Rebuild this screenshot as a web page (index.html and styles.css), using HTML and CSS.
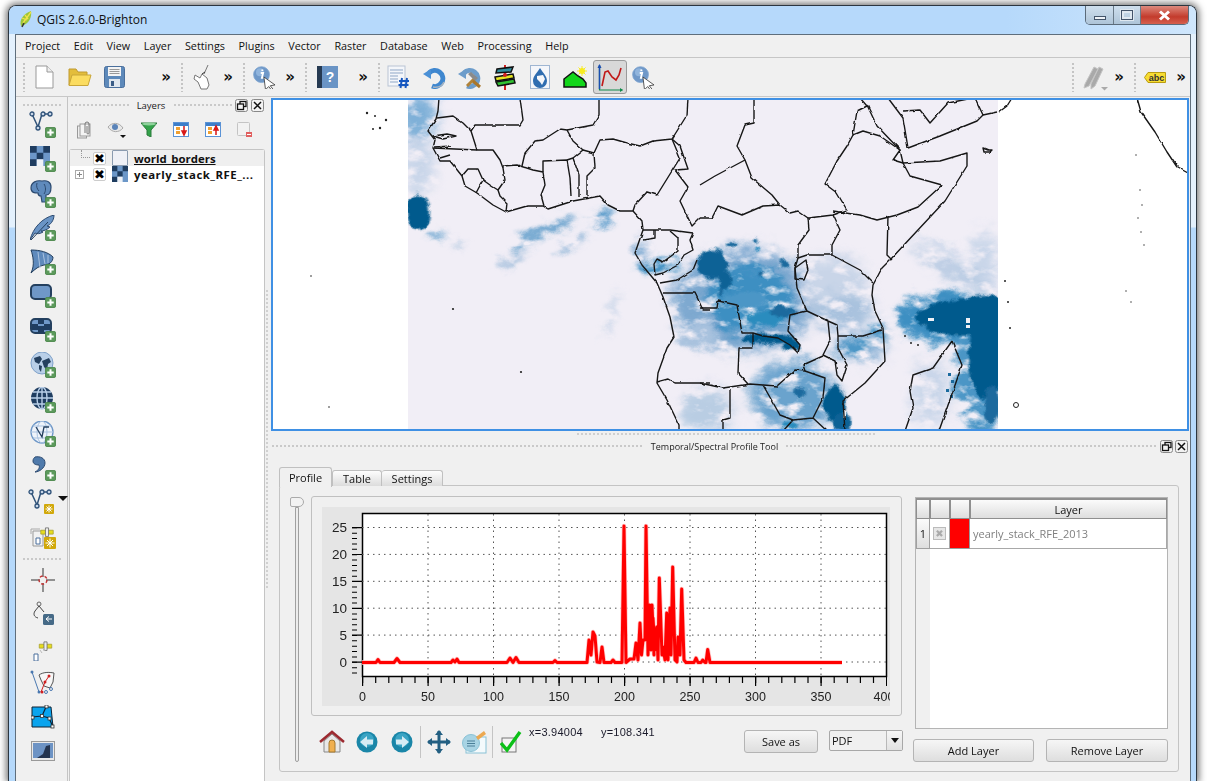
FILE: index.html
```html
<!DOCTYPE html>
<html lang="en">
<head>
<meta charset="utf-8">
<title>QGIS 2.6.0-Brighton</title>
<link rel="stylesheet" href="styles.css">
</head>
<body>
<svg class="defs" width="0" height="0" aria-hidden="true">
  <defs>
    <symbol id="plus" viewBox="0 0 12 12"><rect x=".5" y=".5" width="11" height="11" rx="1.5" fill="#5c9a5c" stroke="#4a874a"/><path d="M6 2.5v7M2.5 6h7" stroke="#fff" stroke-width="2.2"/></symbol>
    <symbol id="idn" viewBox="0 0 34 30"><circle cx="12" cy="12" r="10" fill="#6f98c8" stroke="#7fa5d0"/><circle cx="10" cy="9" r="5" fill="#90b4dc"/><path d="M13 5.5v2M11 10h3l-1.500 6h2" stroke="#fff" stroke-width="2.300" fill="none"/><path d="M15 15l14 10-6 1 4 5-2 1-4-5-4 4z" fill="#fff" stroke="#333"/></symbol>
    <symbol id="grid4" viewBox="0 0 20 20"><rect width="20" height="20" fill="#6c97c8"/><path d="M0 0h6.700v6.700H0zM13.300 0H20v6.700h-6.700zM6.700 6.700h6.600v6.600H6.700zM0 13.300h6.700V20H0z" fill="#1f3d60"/><path d="M6.700 13.300h6.600V20H6.700z" fill="#eef2f7"/></symbol>
    <symbol id="sm-max" viewBox="0 0 13 13"><rect x=".5" y=".5" width="12" height="12" rx="2" fill="#f2f2f2" stroke="#888"/><rect x="5" y="2.500" width="6" height="5" fill="none" stroke="#111" stroke-width="1.300"/><rect x="2.500" y="5" width="6" height="5.500" fill="#f2f2f2" stroke="#111" stroke-width="1.300"/></symbol>
    <symbol id="sm-x" viewBox="0 0 13 13"><rect x=".5" y=".5" width="12" height="12" rx="2" fill="#f2f2f2" stroke="#888"/><path d="M3 3l7 7M10 3l-7 7" stroke="#111" stroke-width="1.500"/></symbol>
    <symbol id="snap" viewBox="0 0 20 18"><path d="M2 8h16v5H2z" fill="#e6dc1e" stroke="#a8a030"/><path d="M8 5h4v11H8z" fill="#eee" stroke="#666"/></symbol>
    <filter id="b1" x="-30%" y="-30%" width="160%" height="160%"><feGaussianBlur stdDeviation="1.200"/></filter>
    <filter id="b3" x="-30%" y="-30%" width="160%" height="160%"><feGaussianBlur stdDeviation="3"/></filter>
    <filter id="b6" x="-30%" y="-30%" width="160%" height="160%"><feGaussianBlur stdDeviation="6"/></filter>
    <filter id="rough" filterUnits="userSpaceOnUse" x="400" y="90" width="610" height="350" color-interpolation-filters="sRGB">
      <feTurbulence type="fractalNoise" baseFrequency=".05 .08" numOctaves="4" seed="7" result="n"/>
      <feDisplacementMap in="SourceGraphic" in2="n" scale="20" xChannelSelector="R" yChannelSelector="G" result="d"/>
      <feColorMatrix in="n" type="matrix" values="0 0 0 0 0 0 0 0 0 0 0 0 0 0 0 3.500 0 0 0 -.8" result="a"/>
      <feComposite in="d" in2="a" operator="in"/>
    </filter>
    <filter id="rough2" filterUnits="userSpaceOnUse" x="400" y="90" width="610" height="350" color-interpolation-filters="sRGB">
      <feTurbulence type="fractalNoise" baseFrequency=".09" numOctaves="3" seed="4" result="n"/>
      <feDisplacementMap in="SourceGraphic" in2="n" scale="9" xChannelSelector="R" yChannelSelector="G"/>
    </filter>
    <filter id="wiggle" filterUnits="userSpaceOnUse" x="271" y="90" width="930" height="350" color-interpolation-filters="sRGB">
      <feTurbulence type="fractalNoise" baseFrequency=".12" numOctaves="2" seed="2" result="n"/>
      <feDisplacementMap in="SourceGraphic" in2="n" scale="2.500" xChannelSelector="R" yChannelSelector="G"/>
    </filter>
    <clipPath id="mapclip"><rect x="408" y="98" width="590" height="333"/></clipPath>
  </defs>
</svg>

<div class="window">
  <header class="titlebar">
    <svg class="appicon" width="16" height="18" viewBox="0 0 16 18"><path d="M3 16C1 10 5 4 13 1c1 6-2 12-7 14z" fill="#9cc53b"/><path d="M5 13l8-11M4 8l5 2M7 5l3 4" stroke="#f0e24a" stroke-width="1.300"/><path d="M4 17l2-4" stroke="#333" stroke-width="1.500"/></svg>
    <span class="apptitle">QGIS 2.6.0-Brighton</span>
    <div class="winbtns">
      <span class="wb wb-min"><i class="g-min"></i></span>
      <span class="wb wb-max"><i class="g-max"></i></span>
      <span class="wb wb-close"><svg width="13" height="11" viewBox="0 0 13 11"><path d="M2 1.500l9 8M11 1.500l-9 8" stroke="#fff" stroke-width="3"/></svg></span>
    </div>
  </header>

  <div class="client">
    <nav class="menubar">
      <span>Project</span><span>Edit</span><span>View</span><span>Layer</span><span>Settings</span><span>Plugins</span><span>Vector</span><span>Raster</span><span>Database</span><span>Web</span><span>Processing</span><span>Help</span>
    </nav>

    <div class="toolbar">
      <div class="tg tg-file">
        <i class="grip"></i>
        <span class="tb"><svg width="19" height="24" viewBox="0 0 19 24"><path d="M1 1h11l6 6v16H1z" fill="#fff" stroke="#999"/><path d="M12 1v6h6" fill="#eee" stroke="#999"/></svg></span>
        <span class="tb"><svg width="24" height="20" viewBox="0 0 24 20"><path d="M1 18V2h7l2 3h9v3" fill="#e3bd3c" stroke="#c09a30"/><path d="M1 18.500L4 8h19l-3 10.500z" fill="#fbdc60" stroke="#c9a638"/></svg></span>
        <span class="tb"><svg width="21" height="22" viewBox="0 0 21 22"><rect x=".5" y=".5" width="20" height="21" rx="2" fill="#5d89ba" stroke="#4a6f9c"/><rect x="4" y="1" width="13" height="9" fill="#f4f4f4"/><path d="M5.500 3.500h10M5.500 5.500h10M5.500 7.500h10" stroke="#999"/><rect x="5" y="13" width="11" height="8" fill="#dfe6ee"/><rect x="7" y="15" width="3" height="5" fill="#3a5c86"/></svg></span>
        <b class="more">»</b>
      </div>
      <div class="tg tg-touch">
        <i class="grip"></i>
        <span class="tb tb-n"><svg width="20" height="26" viewBox="0 0 20 26"><path d="M15 1l-4 9M2 11l5 3 2-4 5 4 2 7-2 4H8l-3-7-4-3z" fill="#fff" stroke="#777"/><path d="M9 10l3-2" stroke="#333"/></svg></span>
        <b class="more">»</b>
      </div>
      <div class="tg tg-touch">
        <i class="grip"></i>
        <span class="tb tb-n"><svg width="27" height="24" viewBox="0 0 34 30"><use href="#idn"/></svg></span>
        <b class="more">»</b>
      </div>
      <div class="tg tg-help">
        <i class="grip"></i>
        <span class="tb tb-h"><svg width="21" height="22" viewBox="0 0 21 22"><rect width="21" height="22" fill="#6a94c5"/><rect width="5" height="22" fill="#263a52"/><text class="helpq" x="13" y="16">?</text></svg></span>
        <b class="more">»</b>
      </div>
      <div class="tg tg-rest">
        <i class="grip"></i>
        <span class="tb tb-t"><svg width="25" height="24" viewBox="0 0 25 24"><rect x="1" y="1" width="17" height="20" fill="#f4f6fa" stroke="#b9c4d4"/><path d="M3 5h13M3 8h13M3 11h8M3 14h8M3 17h8" stroke="#8fa7c7"/><path d="M15 13l-1.500 10M20 13l-1.500 10M12 16h10M11.500 20h10" stroke="#1556c0" stroke-width="2"/></svg></span>
        <span class="tb tb-t"><svg width="23" height="23" viewBox="0 0 23 23"><path d="M6 7a8 8 0 1 1 3 13" fill="none" stroke="#3f87cf" stroke-width="5"/><path d="M0 8l8-5v10z" fill="#4a90d6"/><path d="M10 21c5 1 9-1 11-5" fill="none" stroke="#aab5c0" stroke-width="1.500"/></svg></span>
        <span class="tb tb-t"><svg width="24" height="23" viewBox="0 0 24 23"><path d="M6 7a8 8 0 1 1 3 13" fill="none" stroke="#6d9dcb" stroke-width="5"/><path d="M0 8l8-5v10z" fill="#6d9dcb"/><path d="M9 20l8-8" stroke="#b08238" stroke-width="3"/><path d="M10 8l7 7 3-3-7-6z" fill="#8a8a8a"/><path d="M15 15l7 6" stroke="#a9762b" stroke-width="3"/></svg></span>
        <span class="tb tb-t"><svg width="24" height="25" viewBox="0 0 24 25"><path d="M12 0v25" stroke="#d02020" stroke-width="2"/><path d="M4 4l16-2-2 5-15 1z" fill="#2f8f9f" stroke="#111" stroke-width="1.500"/><path d="M2 12l18-3 1 4-18 3z" fill="#e6e622" stroke="#111" stroke-width="1.500"/><path d="M3 17l18-3 1 4-17 3z" fill="#33c233" stroke="#111" stroke-width="1.500"/><circle cx="12" cy="10" r="2" fill="#d02020"/></svg></span>
        <span class="tb tb-t"><svg width="20" height="24" viewBox="0 0 20 24"><rect x=".5" y=".5" width="19" height="23" fill="#f4f6fa" stroke="#9fb6d2"/><path d="M10 3c3 5 7 8 7 13a7 7 0 0 1-14 0c0-5 4-8 7-13z" fill="#2f6db0"/><path d="M7 11l6-1 2 4-3 6-2-3-3-3z" fill="#f4f6fa"/></svg></span>
        <span class="tb tb-t"><svg width="24" height="22" viewBox="0 0 24 22"><path d="M1 21v-8l9-7 5 4 5 3 3 4v4z" fill="#12d61a" stroke="#111" stroke-width="1.500"/><circle cx="19" cy="5" r="3" fill="#f8ec20"/><path d="M19 0v10M14 5h10M15.500 1.500l7 7M22.500 1.500l-7 7" stroke="#f8ec20"/></svg></span>
        <span class="tb tb-on"><svg width="26" height="29" viewBox="0 0 26 29"><path d="M2.500 3v24h23" fill="none" stroke="#0e8a4a" stroke-width="1.200"/><path d="M2.500 2v24" stroke="#1a4fb0" stroke-width="1.500"/><path d="M.5 5l2-4 2 4z" fill="#1a4fb0"/><path d="M23 25l3 2-3 2z" fill="#0e8a4a"/><path d="M5 23l3-14 3-1 4 6 4 3 3-5 2-7" fill="none" stroke="#c01818" stroke-width="1.600"/></svg></span>
        <span class="tb tb-i"><svg width="27" height="24" viewBox="0 0 34 30"><use href="#idn"/></svg></span>
      </div>
      <div class="tg tg-pen">
        <i class="grip"></i>
        <span class="tb tb-p"><svg width="26" height="28" viewBox="0 0 26 28"><path d="M3 21l9-17 4 2-9 17-5 2zM9 21l8-17 4 2-8 17-4 3z" fill="#a9a9a9" stroke="#c4c4c4"/><path d="M19 24h7l-3.500 3.500z" fill="#aaa"/></svg></span>
        <b class="more">»</b>
      </div>
      <div class="tg tg-abc">
        <i class="grip"></i>
        <span class="tb tb-a"><svg width="22" height="11" viewBox="0 0 22 11"><path d="M4 .5h17.500v10H4L.5 5.500z" fill="#f7dc32" stroke="#b99c10"/><text class="abc" x="12.500" y="8.500">abc</text></svg></span>
        <b class="more">»</b>
      </div>
    </div>

    <div class="main">
      <aside class="vtoolbar">
        <i class="hgrip"></i>
        <span class="vb"><svg width="28" height="28" viewBox="0 0 28 28"><path d="M3 3l6 13 4-13h8" fill="none" stroke="#2f5279" stroke-width="1.500"/><g fill="#c8d6e8" stroke="#2f5279" stroke-width="1.300"><circle cx="3" cy="3" r="2"/><circle cx="9" cy="17" r="2"/><circle cx="14" cy="3" r="2"/><circle cx="21" cy="3" r="2"/></g><use href="#plus" x="16" y="16" width="11" height="11"/></svg></span>
        <span class="vb"><svg width="26" height="26" viewBox="0 0 26 26"><use href="#grid4" width="20" height="20"/><use href="#plus" x="15" y="15" width="11" height="11"/></svg></span>
        <span class="vb"><svg width="26" height="28" viewBox="0 0 26 28"><path d="M1 8c0-6 6-8 11-7 5-1 9 1 9 6 0 5-2 8-5 8v7h-4l-1-6c-2 0-3-1-3-3-3 0-7 0-7-5z" fill="#5f8abc" stroke="#2c4a70" stroke-width="1.200"/><path d="M7 3c-1 3 0 6 2 8M14 4c2 3 2 7 0 10" fill="none" stroke="#2c4a70"/><use href="#plus" x="15" y="17" width="11" height="11"/></svg></span>
        <span class="vb"><svg width="26" height="26" viewBox="0 0 26 26"><path d="M0 25C3 13 12 3 24 0c0 6-4 10-7 11l3 1c-3 3-7 4-9 4l2 1c-3 2-6 2-8 1z" fill="#6a94c5" stroke="#2c4a70"/><path d="M1 25L18 7" stroke="#24405f"/><use href="#plus" x="15" y="15" width="11" height="11"/></svg></span>
        <span class="vb"><svg width="26" height="26" viewBox="0 0 26 26"><path d="M1 1c9 0 17 2 22 7 0 5-4 8-9 8C9 17 5 20 1 24c4-8 2-17 0-23z" fill="#5f8abc" stroke="#24405f"/><path d="M8 3l2 16M13 4l2 11M18 6l0 8" stroke="#aac3e0"/><use href="#plus" x="15" y="15" width="11" height="11"/></svg></span>
        <span class="vb"><svg width="26" height="26" viewBox="0 0 26 26"><rect x="1" y="1" width="20" height="14" rx="4" fill="#6f98c8" stroke="#24405f" stroke-width="2"/><use href="#plus" x="15" y="13" width="11" height="11"/></svg></span>
        <span class="vb"><svg width="26" height="26" viewBox="0 0 26 26"><rect x="1" y="1" width="20" height="14" rx="4" fill="#6f98c8" stroke="#24405f" stroke-width="2"/><path d="M8 1h6v5H8zM2 6h6v6H2zM14 6h6v6h-6z" fill="#1f3d60"/><path d="M8 8h6v7H8z" fill="#1f3d60"/><use href="#plus" x="15" y="13" width="11" height="11"/></svg></span>
        <span class="vb"><svg width="26" height="26" viewBox="0 0 26 26"><circle cx="12" cy="11" r="11" fill="#b9cfe8" stroke="#7fa1c9"/><path d="M4 6l6-2 2 3-3 5-4-2zM12 9l7-3 2 4-3 2-1 6-3-3zM9 13l3 1-1 6-2-3z" fill="#25405f"/><use href="#plus" x="15" y="15" width="11" height="11"/></svg></span>
        <span class="vb"><svg width="26" height="26" viewBox="0 0 26 26"><circle cx="12" cy="11" r="11" fill="#1f3d60"/><ellipse cx="12" cy="11" rx="5" ry="11" fill="none" stroke="#b9cfe8" stroke-width="1.400"/><path d="M1 11h22M3 5h18M3 17h18M12 0v22" stroke="#b9cfe8" stroke-width="1.400"/><use href="#plus" x="15" y="15" width="11" height="11"/></svg></span>
        <span class="vb"><svg width="26" height="26" viewBox="0 0 26 26"><circle cx="12" cy="11" r="11" fill="#eef3fa" stroke="#6f98c8" stroke-width="1.300"/><path d="M1 11h22M3 5h18M3 17h18" stroke="#a9c2e0"/><ellipse cx="12" cy="11" rx="5" ry="11" fill="none" stroke="#a9c2e0"/><path d="M6 6l6 10 2-10h5" fill="none" stroke="#25405f" stroke-width="1.300"/><use href="#plus" x="15" y="15" width="11" height="11"/></svg></span>
        <span class="vb"><svg width="26" height="26" viewBox="0 0 26 26"><path d="M5 2c5-1 10 1 10 6s-6 9-10 9c4-2 5-5 4-7-3 0-6-1-6-4 0-2 1-3 2-4z" fill="#4f7aab" stroke="#2c4a70"/><use href="#plus" x="15" y="15" width="11" height="11"/></svg></span>
        <span class="vb vb-drop"><svg width="28" height="26" viewBox="0 0 28 26"><path d="M3 3l6 13 4-13h8" fill="none" stroke="#2f5279" stroke-width="1.500"/><g fill="#c8d6e8" stroke="#2f5279" stroke-width="1.300"><circle cx="3" cy="3" r="2"/><circle cx="9" cy="17" r="2"/><circle cx="14" cy="3" r="2"/><circle cx="21" cy="3" r="2"/></g><rect x="16" y="15" width="10" height="10" rx="1" fill="#d1a80a"/><path d="M21 16.500v7M17.500 20h7M18.500 17.500l5 5M23.500 17.500l-5 5" stroke="#fff"/></svg><i class="drop"></i></span>
        <span class="vb"><svg width="26" height="26" viewBox="0 0 26 26"><path d="M3 7h10v15H3z" fill="#f2f2f2" stroke="#999"/><path d="M1 10V5h9" fill="none" stroke="#aaa"/><path d="M6 14h4v6H6z" fill="#fff" stroke="#4a6f9c"/><use href="#snap" x="8" y="0" width="18" height="14"/><rect x="14" y="13" width="12" height="12" rx="1" fill="#d1a80a"/><path d="M20 14.500v9M15.500 19h9M17 16l6 6M23 16l-6 6" stroke="#fff"/></svg></span>
        <i class="hgrip hgrip-b"></i>
        <span class="vb"><svg width="24" height="24" viewBox="0 0 24 24"><path d="M12 0v9M12 15v9M0 12h9M15 12h9" stroke="#333"/><circle cx="12" cy="12" r="4" fill="none" stroke="#c23030" stroke-width="1.400" stroke-dasharray="3 2"/></svg></span>
        <span class="vb"><svg width="26" height="26" viewBox="0 0 26 26"><circle cx="9" cy="3" r="2" fill="none" stroke="#666"/><path d="M9 5l-4 5c-2 3-1 6 3 7M9 5l5 6" fill="none" stroke="#444"/><rect x="13" y="13" width="11" height="11" rx="1.500" fill="#466a87"/><path d="M22 18h-6M19 15.500L16 18l3 2.500" fill="none" stroke="#fff"/></svg></span>
        <span class="vb"><svg width="24" height="24" viewBox="0 0 24 24"><use href="#snap" x="5" y="1" width="19" height="14"/><path d="M9 13l2 3M12 11l2 3" stroke="#bbb"/><path d="M3 17h4v7H3z" fill="#fff" stroke="#4a6f9c"/></svg></span>
        <span class="vb"><svg width="26" height="26" viewBox="0 0 26 26"><path d="M2 2l7 20" stroke="#4a78b0"/><circle cx="2" cy="2" r="1.500" fill="#4a78b0"/><circle cx="9" cy="22" r="1.500" fill="#4a78b0"/><path d="M9 5c4-3 10-3 15-2l-1 9-3 6-6-2-3-6z" fill="#f6f6f6" stroke="#555"/><path d="M11 22l4-10 4-6" fill="none" stroke="#d02020"/><circle cx="12" cy="22" r="1.500" fill="#d02020"/><circle cx="15" cy="12" r="1.500" fill="#d02020"/><circle cx="19" cy="6" r="1.500" fill="#d02020"/><circle cx="16" cy="22" r="1.500" fill="none" stroke="#4a78b0"/><circle cx="21" cy="19" r="1.500" fill="none" stroke="#4a78b0"/></svg></span>
        <span class="vb"><svg width="24" height="24" viewBox="0 0 24 24"><path d="M1 2h19l2 20H1z" fill="#0aa4ee" stroke="#123"/><path d="M15 2L11 11l-10 1M11 11l7 2 4 9" fill="none" stroke="#123" stroke-width="1.200"/><g fill="#fff" stroke="#333" stroke-width=".8"><rect x="14" y="0" width="3" height="3"/><rect x="0" y="11" width="3" height="3"/><rect x="9.500" y="9.500" width="3" height="3"/><rect x="17" y="12" width="3" height="3"/><rect x="20" y="20" width="3" height="3"/></g></svg></span>
        <span class="vb"><svg width="24" height="20" viewBox="0 0 24 20"><rect x=".5" y=".5" width="23" height="19" fill="#e9e9e9" stroke="#999"/><rect x="2" y="2" width="20" height="15" fill="#6d93c4"/><path d="M6 17l6-4 3-8 4-1v13z" fill="#24344f"/></svg></span>
      </aside>

      <section class="layers">
        <div class="dock-title">
          <i class="tgrip"></i><span class="dock-name">Layers</span><i class="tgrip"></i>
          <svg class="sb" width="13" height="13"><use href="#sm-max"/></svg>
          <svg class="sb" width="13" height="13"><use href="#sm-x"/></svg>
        </div>
        <div class="layer-tools">
          <span class="lt"><svg width="16" height="18" viewBox="0 0 16 18"><rect x=".5" y="5" width="9" height="12" fill="#eee" stroke="#999"/><rect x="3" y="3" width="10" height="12" fill="#f4f4f4" stroke="#999"/><path d="M8 12V3a2 2 0 0 1 4 0v9a1 1 0 0 1-2 0V5" fill="none" stroke="#777"/></svg></span>
          <span class="lt"><svg width="20" height="18" viewBox="0 0 20 18"><path d="M1 6c4-5 11-5 15 1-4 5-11 5-15-1z" fill="#e8e8e8" stroke="#aaa"/><circle cx="8" cy="6" r="3" fill="#5a83b8"/><path d="M13 14h6l-3 3z" fill="#111"/></svg></span>
          <span class="lt"><svg width="16" height="15" viewBox="0 0 16 15"><path d="M0 1h16l-6 7v7l-4-2V8z" fill="#33a24a" stroke="#2a7a3a"/><ellipse cx="8" cy="2" rx="7" ry="1.500" fill="#8ed29b"/></svg></span>
          <span class="lt"><svg width="16" height="15" viewBox="0 0 16 15"><rect x=".5" y=".5" width="15" height="14" fill="#fff" stroke="#5b93d6"/><rect x="1" y="1" width="14" height="3" fill="#3d7ec9"/><rect x="3" y="5" width="4" height="3" fill="#f0a030"/><rect x="3" y="9" width="4" height="3" fill="#f0a030"/><path d="M11 4v7M9 9l2 4 2-4z" stroke="#d81818" fill="#d81818" stroke-width="1.500"/></svg></span>
          <span class="lt"><svg width="16" height="15" viewBox="0 0 16 15"><rect x=".5" y=".5" width="15" height="14" fill="#fff" stroke="#5b93d6"/><rect x="1" y="1" width="14" height="3" fill="#3d7ec9"/><rect x="3" y="5" width="4" height="3" fill="#f0a030"/><rect x="3" y="9" width="4" height="3" fill="#f0a030"/><path d="M11 13V6M9 8l2-4 2 4z" stroke="#d81818" fill="#d81818" stroke-width="1.500"/></svg></span>
          <span class="lt"><svg width="16" height="16" viewBox="0 0 16 16"><rect x=".5" y=".5" width="12" height="13" rx="1" fill="#f2f2f2" stroke="#c4c4c4"/><rect x="9" y="10" width="6" height="5" fill="#e06060"/><path d="M10 12.500h4" stroke="#fff"/></svg></span>
        </div>
        <div class="tree">
          <div class="tree-row tree-row-sel">
            <i class="conn"></i>
            <span class="chk">✖</span>
            <i class="swatch"></i>
            <span class="lname lname-u">world_borders</span>
          </div>
          <div class="tree-row">
            <i class="expand"></i>
            <span class="chk">✖</span>
            <svg class="rico" width="16" height="16"><use href="#grid4" width="16" height="16"/></svg>
            <span class="lname lname-w">yearly_stack_RFE_...</span>
          </div>
        </div>
      </section>

      <div class="splitter"><i class="sgrip"></i></div>

      <section class="rightcol">
        <div class="mapcanvas">
          <svg width="918" height="333" viewBox="271 98 918 333">
            <rect x="271" y="98" width="918" height="333" fill="#fff"/>
            <rect x="408" y="98" width="590" height="333" fill="#f1eef6"/>
            <g clip-path="url(#mapclip)">
              <g filter="url(#rough)">
                <g filter="url(#b6)">
                  <ellipse cx="418" cy="116" rx="20" ry="22" fill="#7fb0d8"/>
                  <ellipse cx="420" cy="165" rx="16" ry="28" fill="#c9d6e9"/>
                  <ellipse cx="745" cy="300" rx="72" ry="52" fill="#7ea9d0"/>
                  <ellipse cx="835" cy="285" rx="34" ry="30" fill="#c9d5e8"/>
                  <ellipse cx="845" cy="312" rx="30" ry="18" fill="#a9c2de"/>
                  <ellipse cx="795" cy="395" rx="44" ry="34" fill="#6aa3cd"/>
                  <ellipse cx="708" cy="410" rx="26" ry="22" fill="#b9cde3"/>
                  <ellipse cx="860" cy="348" rx="28" ry="14" fill="#92b6d8"/>
                  <ellipse cx="932" cy="392" rx="18" ry="34" fill="#c9d6e9"/>
                  <ellipse cx="985" cy="262" rx="14" ry="30" fill="#c9d6e9"/>
                  <ellipse cx="955" cy="270" rx="46" ry="7" transform="rotate(28 955 270)" fill="#b0c6e0"/>
                </g>
                <g filter="url(#b3)">
                  <ellipse cx="437" cy="236" rx="9" ry="3" fill="#5c9ccb"/>
                  <ellipse cx="460" cy="245" rx="6" ry="3" fill="#b9cde3"/>
                  <ellipse cx="512" cy="260" rx="16" ry="4" transform="rotate(-20 512 260)" fill="#a9c2de"/>
                  <ellipse cx="530" cy="240" rx="20" ry="5" transform="rotate(-25 530 240)" fill="#6aa3cd"/>
                  <ellipse cx="555" cy="226" rx="22" ry="5" transform="rotate(-22 555 226)" fill="#6aa3cd"/>
                  <ellipse cx="601" cy="218" rx="14" ry="6" fill="#5c9ccb"/>
                  <ellipse cx="575" cy="242" rx="16" ry="4" transform="rotate(-25 575 242)" fill="#92b6d8"/>
                  <ellipse cx="660" cy="265" rx="22" ry="6" fill="#3e8fc2"/>
                  <ellipse cx="640" cy="250" rx="8" ry="10" fill="#92b6d8"/>
                  <ellipse cx="750" cy="300" rx="44" ry="34" fill="#3e8fc2"/>
                  <ellipse cx="700" cy="335" rx="20" ry="14" fill="#a9c2de"/>
                  <ellipse cx="855" cy="347" rx="14" ry="9" fill="#4c96c6"/>
                  <ellipse cx="880" cy="332" rx="7" ry="10" fill="#4c96c6"/>
                  <ellipse cx="946" cy="250" rx="34" ry="3" transform="rotate(28 946 250)" fill="#c9d6e9"/>
                  <ellipse cx="612" cy="315" rx="26" ry="3" transform="rotate(-72 612 315)" fill="#c9d6e9"/>
                  <ellipse cx="955" cy="318" rx="60" ry="26" fill="#3e8fc2"/>
                  <ellipse cx="982" cy="372" rx="26" ry="60" fill="#4c96c6"/>
                </g>
              </g>
              <g filter="url(#rough2)">
                <g filter="url(#b1)">
                  <ellipse cx="418" cy="212" rx="12" ry="18" fill="#045a8d"/>
                  <ellipse cx="712" cy="264" rx="15" ry="15" fill="#0b6296"/>
                  <ellipse cx="725" cy="280" rx="7" ry="10" fill="#0b6296"/>
                  <ellipse cx="720" cy="292" rx="3" ry="5" fill="#1a6a9e"/>
                  <ellipse cx="732" cy="245" rx="4" ry="3" fill="#1a6a9e"/>
                  <circle cx="756" cy="240" r="2.500" fill="#1a6a9e"/>
                  <circle cx="758" cy="250" r="2.500" fill="#2b8cbe"/>
                  <circle cx="785" cy="264" r="5" fill="#1a6a9e"/>
                  <circle cx="760" cy="273" r="3" fill="#1a6a9e"/>
                  <ellipse cx="745" cy="300" rx="22" ry="8" fill="#4c96c6"/>
                  <ellipse cx="765" cy="318" rx="18" ry="7" fill="#2b8cbe"/>
                  <ellipse cx="783" cy="312" rx="12" ry="6" fill="#1a6a9e"/>
                  <ellipse cx="768" cy="339" rx="26" ry="5" fill="#045a8d"/>
                  <ellipse cx="792" cy="346" rx="8" ry="6" fill="#045a8d"/>
                  <ellipse cx="835" cy="404" rx="11" ry="18" fill="#045a8d"/>
                  <ellipse cx="842" cy="422" rx="9" ry="10" fill="#0b6296"/>
                  <circle cx="800" cy="393" r="5" fill="#1a6a9e"/>
                  <ellipse cx="790" cy="425" rx="8" ry="4" fill="#2b8cbe"/>
                  <ellipse cx="965" cy="318" rx="48" ry="18" fill="#045a8d"/>
                  <ellipse cx="985" cy="303" rx="20" ry="9" fill="#045a8d"/>
                  <ellipse cx="987" cy="355" rx="19" ry="44" fill="#045a8d"/>
                  <ellipse cx="992" cy="405" rx="8" ry="20" fill="#1a6a9e"/>
                </g>
              </g>
              <path d="M966 318h4v5h-4zM966 325h4v3h-4zM928 318h6v3h-6zM843 410h3v8h-3z" fill="#eef0f6"/>
              <path d="M948 373h3v3h-3zM951 380h3v3h-3zM946 389h3v3h-3zM950 395h3v3h-3z" fill="#1a6a9e"/>
            </g>
            <g class="borders" filter="url(#wiggle)">
              <path d="M439 98L438 111 436 119 428 131 435 140 433 148 440 161 450 161 462 176 465 186 477 193 493 205 506 212 527 206 543 206 548 209 573 201 600 196 608 205 620 211 633 211 642 221 643 230 635 253 642 265 657 283 663 297 670 317 674 337 667 348 658 373 657 383 667 400 679 425 679 431"/>
              <path d="M520 98L523 120 520 125 475 125 471 131 477 150 493 150 500 160 503 168 505 180 498 190 500 196 507 203 506 212"/>
              <path d="M437 118L453 116 463 123 471 131M433 148L477 150"/>
              <path d="M462 176L468 169 478 169 483 180 476 193M483 180L490 185 498 190"/>
              <path d="M503 166L517 165 533 170 543 172 545 185 541 195 544 206"/>
              <path d="M543 172V161L567 160 570 178 571 196"/>
              <path d="M522 166L525 153 535 141 543 140 560 129 567 130 573 141 583 150 573 158 567 160"/>
              <path d="M567 130L593 125 599 115V98"/>
              <path d="M583 150L594 153 600 140 613 139 627 143 640 146 653 141 672 139 687 115 688 98"/>
              <path d="M573 158L579 175V197M594 153L595 168 587 176V196"/>
              <path d="M672 139L680 158 657 195 647 192 635 205 633 211"/>
              <path d="M672 139L680 146 688 169 675 170 688 187 680 201 692 226 700 218"/>
              <path d="M643 230H655V238L643 240M655 230H670L693 233M670 231L678 238V251L663 262 657 259 654 264 655 275 663 273 678 265 684 255 693 250 690 240 693 233"/>
              <path d="M754 98V123L745 125 737 146 745 160 715 176 700 185"/>
              <path d="M745 160L752 178 772 195 780 205"/>
              <path d="M700 218H712L718 206 742 215 763 206 780 205 790 213 798 211 808 218 833 215 847 210 837 193 825 184 837 161 847 146 853 135 863 131 880 136 900 150"/>
              <path d="M853 135L857 111 867 106 860 98M867 105L877 126 900 150 893 160 903 163 900 150"/>
              <path d="M888 98L903 118 908 148M903 111L920 110 930 123 948 103 973 98M975 98L983 115 997 112"/>
              <path d="M908 148L940 136 977 121 983 115"/>
              <path d="M903 163L940 161 967 153 967 166 945 201 917 231 890 260 882 268 873 285 872 295 875 311 883 328 885 361 865 383 843 401 845 431"/>
              <path d="M903 163L910 176 942 185 918 207 897 215 877 220 860 215 833 211M888 216L887 255 892 260"/>
              <path d="M808 218L809 230 798 245V258L807 255H832V245L840 230 833 215M832 255L860 270 873 283"/>
              <path d="M798 258L795 268 797 288 807 311 828 321 837 325 838 336H863L882 330M828 321L830 341 823 355 835 361 837 375 842 381 847 365 838 348V336"/>
              <path d="M807 311L790 315 788 331 800 345 798 353 790 345 778 338 763 336 753 333H742L737 305 718 301 717 308H700M753 333V348H739L738 373 748 384"/>
              <path d="M823 356L803 365 805 371 795 370 777 386 763 385 750 384 723 388 700 383"/>
              <path d="M763 385L780 415 793 420 813 418 823 398 825 378 805 371M730 390V418L723 420V431M793 420L783 431M813 418L827 431"/>
              <path d="M663 293H695L703 310H710M657 382L668 379 675 383H710"/>
              <path d="M660 283L677 280 693 270 697 260"/>
              <path d="M952 341L962 365 953 391 940 428 938 431M952 341L933 368 913 375 910 391 913 408 905 431"/>
              <path d="M1012 98L1007 106 999 112M1137 98L1141 112 1155 132 1167 152 1177 167 1188 173"/>
              <path d="M433 136L447 134 456 136 443 139zM435 147L452 146M440 158L450 155"/>
              <path d="M795 268L806 260 808 270 804 280 795 279z"/>
              <path d="M983 148L988 150H992L990 152H984z"/>
            </g>
            <g fill="#222">
              <circle cx="367" cy="113" r="1.200"/><circle cx="375" cy="116" r="1"/><circle cx="386" cy="120" r="1.200"/><circle cx="373" cy="129" r="1"/><circle cx="380" cy="128" r="1.200"/>
              <circle cx="311" cy="276" r=".8"/><circle cx="329" cy="407" r=".8"/><circle cx="453" cy="309" r="1.100"/><circle cx="521" cy="372" r="1.100"/>
              <circle cx="1005" cy="281" r="1"/><circle cx="1008" cy="302" r="1"/><circle cx="1010" cy="328" r="1"/>
              <circle cx="1136" cy="155" r=".7"/><circle cx="1140" cy="190" r=".7"/><circle cx="1142" cy="205" r=".7"/><circle cx="1138" cy="218" r=".7"/><circle cx="1141" cy="232" r=".7"/><circle cx="1144" cy="245" r=".7"/><circle cx="1126" cy="291" r=".7"/><circle cx="1131" cy="302" r=".7"/><circle cx="905" cy="336" r="1"/><circle cx="911" cy="343" r="1"/><circle cx="918" cy="345" r="1"/>
            </g>
            <circle cx="1016" cy="405" r="2.500" fill="none" stroke="#222"/>
          </svg>
        </div>

        <div class="dock">
          <i class="dock-hgrip"></i>
          <div class="dock-title2">
            <i class="tgrip"></i><span class="dock-name2">Temporal/Spectral Profile Tool</span><i class="tgrip"></i>
            <svg class="sb" width="13" height="13"><use href="#sm-max"/></svg>
            <svg class="sb" width="13" height="13"><use href="#sm-x"/></svg>
          </div>
          <div class="tabs">
            <span class="tab tab-on">Profile</span><span class="tab tab-t">Table</span><span class="tab tab-s">Settings</span>
          </div>
          <div class="pane">
            <div class="slider"><i class="s-handle"></i><i class="s-groove"></i></div>
            <div class="plotcol">
              <div class="plotframe">
                <svg class="chart" width="568" height="199" viewBox="322 507 568 199">
                  <rect x="322" y="507" width="568" height="199" fill="#e5e5e5"/>
                  <rect x="362.500" y="513.500" width="524" height="163" fill="#fff" stroke="#000" stroke-width="1.500"/>
                  <g class="grid">
                    <path d="M362 527.500H887M362 554.400H887M362 581.300H887M362 608.200H887M362 635.100H887M362 662H887"/>
                    <path d="M428 514V676M493.500 514V676M559 514V676M624.500 514V676M690 514V676M755.500 514V676M821 514V676"/>
                  </g>
                  <polyline class="trace-halo" points="362,662.500 376,662.500 378,659.500 380,662.500 394,662.500 397,658.500 400,662.500 451,662.500 453,660 455,662 457,659 459,662.500 507,662.500 510,658 513,662.500 516,657.500 519,662.500 553,662.500 555,660.500 557,662.500 587,662.500 589,640 591,655 593,632 595,636 597,662 600,662.500 602,647 604,662.500 611,662.500 613,660 615,662.500 622,662.500 624,526 626,662.500 630,659 634,659 636,643 638,660 640,623 641.500,655 643,640 645,640 646,526 648,655 649.500,605 651,650 652,605 654,655 653,618 655,650 656.700,627 658,660 659.300,578 662,655 663,647 665,660 666.700,613 668,660 670,608 671,655 672.700,567 675,660 677,662 678,637 680,655 681.700,589 684,660 686,662.500 694,662.500 696,658 698,662.500 701,662.500 702.700,660 705,662.500 706,662.500 707.700,649.500 710,662.500 842,662.500"/>
                  <polyline class="trace" points="362,662.500 376,662.500 378,659.500 380,662.500 394,662.500 397,658.500 400,662.500 451,662.500 453,660 455,662 457,659 459,662.500 507,662.500 510,658 513,662.500 516,657.500 519,662.500 553,662.500 555,660.500 557,662.500 587,662.500 589,640 591,655 593,632 595,636 597,662 600,662.500 602,647 604,662.500 611,662.500 613,660 615,662.500 622,662.500 624,526 626,662.500 630,659 634,659 636,643 638,660 640,623 641.500,655 643,640 645,640 646,526 648,655 649.500,605 651,650 652,605 654,655 653,618 655,650 656.700,627 658,660 659.300,578 662,655 663,647 665,660 666.700,613 668,660 670,608 671,655 672.700,567 675,660 677,662 678,637 680,655 681.700,589 684,660 686,662.500 694,662.500 696,658 698,662.500 701,662.500 702.700,660 705,662.500 706,662.500 707.700,649.500 710,662.500 842,662.500"/>
                  <g class="ticks">
                    <path class="tk-minor" d="M362 679.500H887"/>
                    <path class="tk-major" d="M362 681H887"/>
                    <path class="tk-ymin" d="M354.500 527.300V676"/>
                    <path class="tk-ymaj" d="M357 527V676"/>
                  </g>
                  <g class="ylab">
                    <text x="347" y="532">25</text><text x="347" y="559">20</text><text x="347" y="586">15</text><text x="347" y="613">10</text><text x="347" y="640">5</text><text x="347" y="666.500">0</text>
                  </g>
                  <g class="xlab">
                    <text x="362.500" y="701">0</text><text x="428" y="701">50</text><text x="493.500" y="701">100</text><text x="559" y="701">150</text><text x="624.500" y="701">200</text><text x="690" y="701">250</text><text x="755.500" y="701">300</text><text x="821" y="701">350</text><text x="884" y="701">400</text>
                  </g>
                </svg>
              </div>
              <div class="navbar">
                <span class="nb"><svg width="26" height="24" viewBox="0 0 26 24"><path d="M5 22V11l8-7 8 7v11z" fill="#e8e8e8" stroke="#888"/><path d="M10 22v-9a3 3 0 0 1 6 0v9z" fill="#f0b050" stroke="#a57a30"/><path d="M1 12L13 2l12 10" fill="none" stroke="#9c2a30" stroke-width="2.500"/></svg></span>
                <span class="nb"><svg width="22" height="22" viewBox="0 0 22 22"><circle cx="11" cy="11" r="10.500" fill="#1a86a8"/><circle cx="11" cy="9" r="7" fill="#3aa4c4"/><path d="M4 11l7-6v3.500h6v5h-6V17z" fill="#d6ecf4"/></svg></span>
                <span class="nb"><svg width="22" height="22" viewBox="0 0 22 22"><circle cx="11" cy="11" r="10.500" fill="#1a86a8"/><circle cx="11" cy="9" r="7" fill="#3aa4c4"/><path d="M18 11l-7-6v3.500H5v5h6V17z" fill="#d6ecf4"/></svg></span>
                <i class="nsep"></i>
                <span class="nb"><svg width="24" height="24" viewBox="0 0 24 24"><path d="M12 1v22M1 12h22" stroke="#235f82" stroke-width="3"/><path d="M12 0l4 5H8zM12 24l4-5H8zM0 12l5-4v8zM24 12l-5-4v8z" fill="#235f82"/></svg></span>
                <span class="nb"><svg width="26" height="24" viewBox="0 0 26 24"><rect x="5" y="7" width="20" height="16" fill="#f4fafc" stroke="#8ac2d6"/><circle cx="10" cy="13" r="8.500" fill="#a8d4e4" stroke="#8ac2d6"/><path d="M6 11h8M6 13.500h8M6 16h8" stroke="#4a7f98"/><path d="M15 7l8-6 2 3-8 6z" fill="#eca850"/></svg></span>
                <i class="nsep"></i>
                <span class="nb nb-c"><svg width="22" height="22" viewBox="0 0 22 22"><rect x="2" y="7" width="14" height="14" fill="#f4f4f4" stroke="#777"/><path d="M1 12l6 7L20 1" fill="none" stroke="#0cc018" stroke-width="3.400"/></svg></span>
                <div class="coords"><span>x=3.94004</span><span>y=108.341</span></div>
                <span class="btn btn-save">Save as</span>
                <span class="combo"><span class="combo-v">PDF</span><i class="combo-b"><i class="combo-a"></i></i></span>
              </div>
            </div>
            <div class="tablecol">
              <div class="tbl">
                <span class="th"></span><span class="th"></span><span class="th"></span><span class="th th-l">Layer</span>
                <span class="rh">1</span>
                <span class="td td-chk"><i class="dchk">✖</i></span>
                <span class="td td-col"></span>
                <span class="td td-name">yearly_stack_RFE_2013</span>
                <span class="t-gut"></span><span class="t-body"></span>
              </div>
              <div class="tbtns"><span class="btn btn-a">Add Layer</span><span class="btn btn-r">Remove Layer</span></div>
            </div>
          </div>
        </div>
      </section>
    </div>
  </div>
</div>
</body>
</html>
```

FILE: styles.css
```css
* { box-sizing: border-box; }
html, body { margin: 0; height: 100%; overflow: hidden; background: #fff; }
body { font-family: "Open Sans", "Noto Sans", sans-serif; font-size: 11px; color: #111; }
i { display: block; font-style: normal; }
.defs { position: absolute; }

.window {
  width: 1189px; height: 776px; margin: 5px 0 0 8px;
  border: 1px solid #2c3640; border-bottom: 0; border-radius: 8px 8px 0 0;
  box-shadow: 0 0 7px 2px rgba(0,0,0,.55);
  background: linear-gradient(#e4f1fd 0, #e4f1fd 221px, #b6d9fb 222px);
}
.titlebar { height: 28px; display: flex; align-items: flex-start; background: linear-gradient(90deg, #b6d9fb 0, #b6d9fb 84%, #cfe6fc 100%); border-radius: 7px 7px 0 0; }
.appicon { margin: 4px 0 0 9px; }
.apptitle { margin: 5px 0 0 3px; font-size: 12px; color: #111; }
.winbtns { margin-left: auto; margin-right: 7px; display: flex; height: 19px; border: 1px solid #5b6b7a; border-top: 0; border-radius: 0 0 5px 5px; overflow: hidden; }
.wb { display: flex; align-items: center; justify-content: center; border-right: 1px solid #6a7a88; }
.wb-min { width: 28px; background: linear-gradient(#cfdfee, #aec4d8); }
.wb-max { width: 27px; background: linear-gradient(#cfdfee, #aec4d8); }
.wb-close { width: 47px; border-right: 0; background: linear-gradient(#dd8a7e, #c33b2c 60%, #d5604f); }
.g-min { width: 12px; height: 4px; margin-top: 6px; background: #eef3f8; border: 1px solid #43546a; }
.g-max { width: 12px; height: 10px; border: 1px solid #43546a; outline: 1px solid #dfe8f0; background: transparent; box-shadow: inset 0 0 0 2px #dfe8f0; }

.client { height: 747px; margin: 0 5px 0 6px; border: 1px solid #5f6e7c; border-bottom: 0; background: #f0f0f0; }
.menubar { height: 23px; display: flex; align-items: center; gap: 13.600px; padding: 0 0 2px 9px; font-size: 10.800px; border-bottom: 1px solid #c6c6c6; }
.toolbar { height: 39px; display: flex; border-bottom: 1px solid #c8c8c8; padding-left: 6px; }
.tg { display: flex; align-items: center; height: 38px; }
.tg-file { width: 158px; }
.tg-touch { width: 62px; }
.tg-help { width: 73px; }
.tg-rest { flex: 1; }
.tg-pen { width: 62px; }
.tg-abc { width: 57px; }
.grip { width: 5px; height: 30px; background-image: radial-gradient(circle, #c4c4c4 1.100px, transparent 1.400px); background-size: 4px 4px; flex: none; }
.tb { width: 35px; height: 38px; display: flex; align-items: center; justify-content: center; flex: none; }
.tb-n { width: 36px; }
.tb-h { width: 36px; }
.tb-t { width: 35px; }
.tb-p { width: 38px; }
.tb-a { width: 34px; }
.tb-i { width: 35px; }
.tb-on { width: 34px; height: 34px; margin-left: 1px; background: #d8d8d8; border: 1px solid #9a9a9a; border-radius: 3px; }
.more { margin-left: auto; margin-right: 9px; font: bold 15px "DejaVu Sans", sans-serif; line-height: 1; flex: none; }
.tg-abc .more { margin-right: 4px; }
.helpq { font: bold 14px "Liberation Sans", sans-serif; fill: #fff; text-anchor: middle; }
.abc { font: bold 9px "Liberation Sans", sans-serif; fill: #333; text-anchor: middle; }

.main { display: flex; height: 684px; }
.vtoolbar { width: 52px; border-right: 1px solid #c4c4c4; display: flex; flex-direction: column; align-items: center; padding-top: 6px; }
.hgrip { width: 40px; height: 5px; flex: none; background-image: radial-gradient(circle, #c9c9c9 1.100px, transparent 1.400px); background-size: 4px 4px; }
.hgrip-b { margin: 3px 0 1px; }
.vb { width: 40px; height: 34.300px; flex: none; display: flex; align-items: center; justify-content: center; position: relative; margin-left: 2px; }
.vb-drop { margin-left: 0; }
.drop { position: absolute; left: 36px; top: 11px; border: 5px solid transparent; border-top: 5px solid #111; border-bottom: 0; }

.layers { width: 197px; display: flex; flex-direction: column; }
.dock-title { height: 17px; display: flex; align-items: center; padding: 0 1px 0 2px; gap: 1px; }
.tgrip { flex: 1; height: 5px; background-image: radial-gradient(circle, #c9c9c9 1.100px, transparent 1.400px); background-size: 4px 4px; }
.dock-name { font-size: 9.500px; margin: 0 7px; color: #222; }
.sb { flex: none; margin-left: 2px; }
.layer-tools { height: 35px; display: flex; align-items: center; padding-left: 1px; }
.lt { width: 32px; display: flex; justify-content: center; padding-bottom: 4px; }
.tree { flex: 1; margin: 0 0 0 1px; border: 1px solid #c4c4c4; border-bottom: 0; border-radius: 3px 3px 0 0; background: #fff; }
.tree-row { height: 16px; display: flex; align-items: center; position: relative; padding-left: 23px; }
.tree-row-sel { background: #efefef; }
.conn { position: absolute; left: 11px; top: 0; width: 9px; height: 8px; border-left: 1px dotted #999; border-bottom: 1px dotted #999; }
.expand { position: absolute; left: 5px; top: 4px; width: 9px; height: 9px; border: 1px solid #aaa; background: linear-gradient(#888,#888) center/5px 1px no-repeat, linear-gradient(#888,#888) center/1px 5px no-repeat; }
.chk { width: 13px; height: 13px; border: 1px solid #ccc; border-radius: 2px; background: #fff; font: 13px/11px "DejaVu Sans", sans-serif; color: #000; text-align: center; flex: none; overflow: hidden; }
.swatch { width: 16px; height: 16px; margin-left: 6px; background: #eef0f6; border: 1px solid #8a9bb0; border-radius: 1px; flex: none; }
.rico { margin-left: 6px; flex: none; }
.lname { margin-left: 6px; font-size: 11.400px; font-weight: 700; white-space: nowrap; color: #111; }
.lname-u { text-decoration: underline; }
.lname-w { letter-spacing: .5px; }

.splitter { width: 5px; display: flex; align-items: center; }
.sgrip { width: 5px; height: 300px; background-image: radial-gradient(circle, #d0d0d0 .9px, transparent 1.200px); background-size: 4px 4px; }
.rightcol { width: 920px; padding-left: 1px; display: flex; flex-direction: column; }
.mapcanvas { width: 918px; height: 333px; margin-top: 1px; flex: none; outline: 2px solid #3f90e4; outline-offset: -2px; overflow: hidden; }
.mapcanvas svg { display: block; }
.borders path { fill: none; stroke: #161616; stroke-width: 1.400; stroke-linejoin: round; }

.dock { flex: 1; margin-left: -1px; }
.dock-hgrip { height: 3px; margin: 1px 0 5px 306px; width: 300px; background-image: radial-gradient(circle, #cfcfcf .9px, transparent 1.200px); background-size: 4px 4px; }
.dock-title2 { height: 13px; display: flex; align-items: center; padding: 0 2px 0 1px; }
.dock-name2 { font-size: 9px; margin: 0 7px; white-space: nowrap; color: #222; }
.tabs { display: flex; height: 19px; margin: 14px 0 0 9px; align-items: flex-end; position: relative; z-index: 1; }
.tab { height: 16px; display: flex; align-items: center; justify-content: center; border: 1px solid #c0c0c0; border-bottom: 0; border-radius: 3px 3px 0 0; background: linear-gradient(#fdfdfd, #dcdcdc); font-size: 11px; }
.tab-on { width: 53px; height: 20px; margin-bottom: -1px; background: #f0f0f0; }
.tab-t { width: 50px; }
.tab-s { width: 61px; border-left: 0; }
.pane { width: 900px; height: 287px; margin: -1px 0 0 9px; border: 1px solid #c4c4c4; border-radius: 3px; padding: 10px 0 0 10px; display: flex; background: #f0f0f0; }
.slider { width: 14px; height: 266px; display: flex; flex-direction: column; align-items: center; flex: none; }
.s-handle { width: 14px; height: 10px; margin-top: 1px; background: #f2f2f2; border: 1px solid #aaa; border-radius: 2px 5px 5px 2px; }
.s-groove { width: 4px; flex: 1; border: 1px solid #a0a0a0; border-radius: 0 0 2px 2px; background: #ececec; margin-left: -1px; }
.plotcol { width: 591px; margin-left: 7px; flex: none; }
.plotframe { height: 220px; border: 1px solid #c0c0c0; border-radius: 3px; padding: 10px 11px 9px 10px; }
.chart { display: block; }
.grid path { fill: none; stroke: #555; stroke-width: 1; stroke-dasharray: 1.500 4; }
.trace { fill: none; stroke: #ff0000; stroke-width: 3; stroke-linejoin: round; }
.trace-halo { fill: none; stroke: #ffc4c4; stroke-width: 4.500; stroke-linejoin: round; }
.ticks path { fill: none; stroke: #000; stroke-width: 1; }
.ticks .tk-minor { stroke-width: 7; stroke-dasharray: 1.200 11.900; }
.ticks .tk-major { stroke-width: 10; stroke-dasharray: 1.200 64.300; }
.ticks .tk-ymin { stroke-width: 5; stroke-dasharray: 1 4.380; }
.ticks .tk-ymaj { stroke-width: 10; stroke-dasharray: 1.200 25.700; }
.ylab text { font: 13.500px "Liberation Sans", sans-serif; text-anchor: end; fill: #222; }
.xlab text { font: 12.500px "Liberation Sans", sans-serif; text-anchor: middle; fill: #222; }

.navbar { display: flex; height: 40px; margin-top: 8px; padding-left: 3px; }
.nb { width: 35px; height: 36px; display: flex; align-items: center; justify-content: center; flex: none; }
.nb-c { width: 36px; }
.nsep { width: 1px; height: 32px; margin: 2px .5px 0; background: #c4c4c4; flex: none; }
.coords { display: flex; gap: 18px; padding-top: 2px; font: 11px "Liberation Sans", "DejaVu Sans", sans-serif; letter-spacing: .25px; white-space: nowrap; color: #1a1a2a; }
.btn { display: flex; align-items: center; justify-content: center; border: 1px solid #b4b4b4; border-radius: 3px; background: linear-gradient(#f6f6f6, #dedede); font-size: 11px; color: #111; }
.btn-save { width: 74px; height: 23px; margin: 6px 0 0 auto; }
.combo { width: 74px; height: 21px; margin: 6px -1px 0 11px; display: flex; align-items: center; border: 1px solid #a8a8a8; border-radius: 2px; background: #f0f0f0; flex: none; }
.combo-v { flex: 1; padding-left: 2px; font-size: 11px; }
.combo-b { width: 16px; height: 19px; display: flex; align-items: center; justify-content: center; border-left: 1px solid #b8b8b8; background: linear-gradient(#f6f6f6, #e2e2e2); }
.combo-a { width: 0; height: 0; border: 4px solid transparent; border-top: 5px solid #111; border-bottom: 0; }

.tablecol { width: 253px; margin-left: 13px; flex: none; }
.tbl { width: 253px; height: 232px; margin-top: 1px; border: 1px solid #b4b4b4; display: grid; grid-template-columns: 14px 20px 20px 1fr; grid-template-rows: 21px 30px 1fr; background: #fff; }
.th { border: 1px solid #8f8f8f; border-top-width: 2px; background: linear-gradient(#fbfbfb, #dedede); font-size: 11px; display: flex; align-items: center; justify-content: center; color: #111; }
.rh { background: linear-gradient(#fbfbfb, #dedede); border: 1px solid #a0a0a0; border-top: 0; display: flex; align-items: center; justify-content: center; font-size: 11px; }
.td { border-bottom: 1px solid #a8a8a8; border-right: 1px solid #a8a8a8; background: #fff; display: flex; align-items: center; }
.td-chk { justify-content: center; }
.dchk { width: 13px; height: 13px; border: 1px solid #bbb; background: #e6e6e6; color: #aaa; font: 10px/11px "DejaVu Sans", sans-serif; text-align: center; }
.td-col { background: #ff0000; border-color: #9a9a9a; }
.td-name { color: #808080; font-size: 11px; padding-left: 3px; }
.t-gut { background: #f0f0f0; }
.t-body { grid-column: span 3; background: #fff; }
.tbtns { display: flex; gap: 12px; margin: 10px 0 0 -2px; }
.btn-a { width: 121px; height: 23px; }
.btn-r { width: 122px; height: 23px; }
```
